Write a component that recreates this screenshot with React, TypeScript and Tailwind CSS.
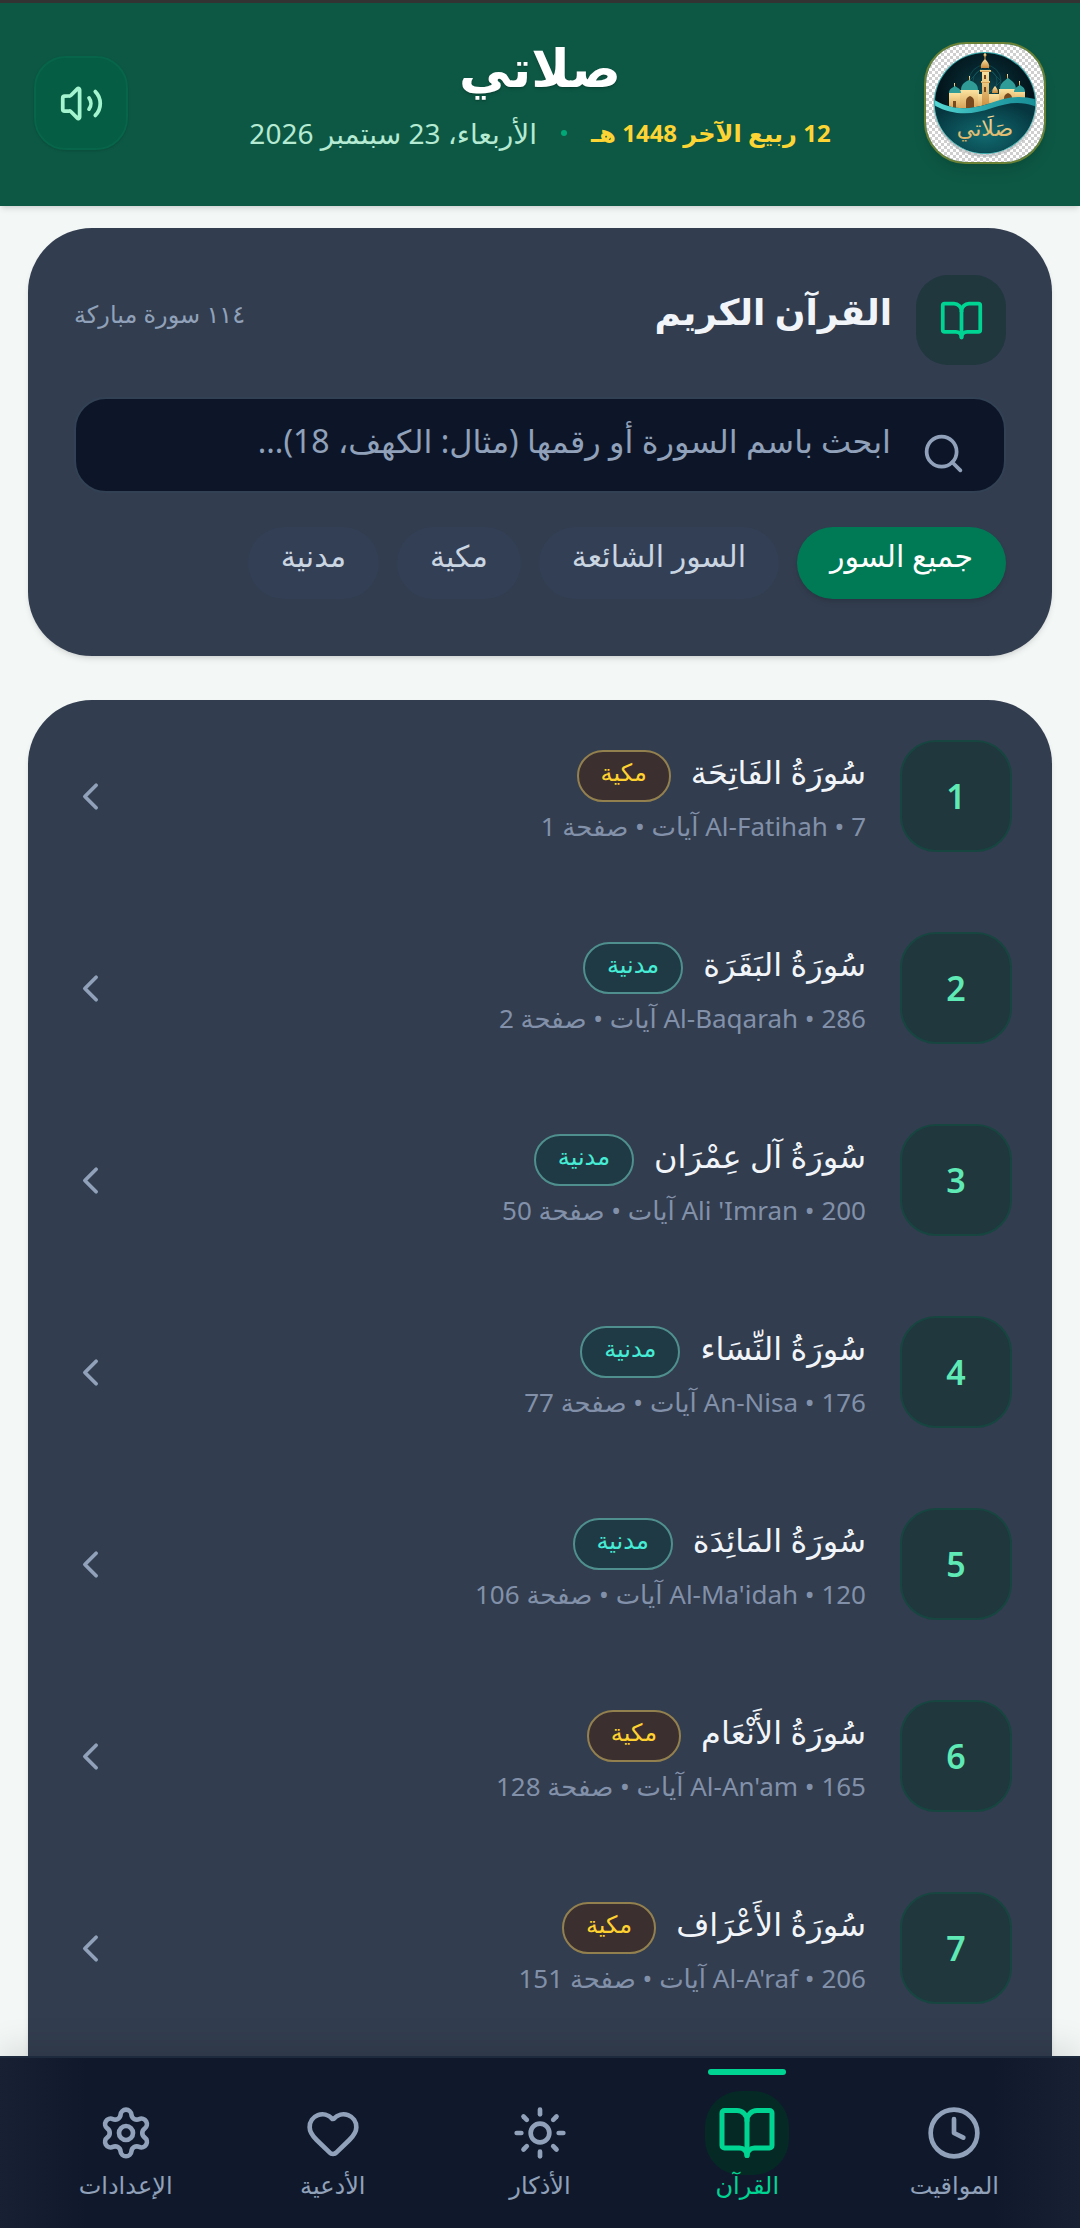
import { useState } from "react";
import { BookOpen, ChevronLeft, Clock, Heart, Search, Settings, Sun, Volume2 } from "lucide-react";
import clsx from "clsx";

type Surah = {
  id: number;
  name: string;
  latin: string;
  ayahs: number;
  page: number;
  place: "makki" | "madani";
};

const surahs: Surah[] = [
  { id: 1, name: "سُورَةُ الفَاتِحَة", latin: "Al-Fatihah", ayahs: 7, page: 1, place: "makki" },
  { id: 2, name: "سُورَةُ البَقَرَة", latin: "Al-Baqarah", ayahs: 286, page: 2, place: "madani" },
  { id: 3, name: "سُورَةُ آل عِمْرَان", latin: "Ali 'Imran", ayahs: 200, page: 50, place: "madani" },
  { id: 4, name: "سُورَةُ النِّسَاء", latin: "An-Nisa", ayahs: 176, page: 77, place: "madani" },
  { id: 5, name: "سُورَةُ المَائِدَة", latin: "Al-Ma'idah", ayahs: 120, page: 106, place: "madani" },
  { id: 6, name: "سُورَةُ الأَنْعَام", latin: "Al-An'am", ayahs: 165, page: 128, place: "makki" },
  { id: 7, name: "سُورَةُ الأَعْرَاف", latin: "Al-A'raf", ayahs: 206, page: 151, place: "makki" },
];

const filters = ["جميع السور", "السور الشائعة", "مكية", "مدنية"];

const tabs = [
  { label: "المواقيت", Icon: Clock },
  { label: "القرآن", Icon: BookOpen },
  { label: "الأذكار", Icon: Sun },
  { label: "الأدعية", Icon: Heart },
  { label: "الإعدادات", Icon: Settings },
];

function Logo() {
  return (
    <svg viewBox="0 0 118 118" className="size-full" role="img" aria-label="صلاتي">
      <defs>
        <pattern id="checks" width="6" height="6" patternUnits="userSpaceOnUse">
          <rect width="6" height="6" fill="#ffffff" />
          <rect width="3" height="3" fill="#cfcfcf" />
          <rect x="3" y="3" width="3" height="3" fill="#cfcfcf" />
        </pattern>
        <radialGradient id="night" cx="0.5" cy="0.4" r="0.45">
          <stop offset="0" stopColor="#0d4c55" />
          <stop offset="0.5" stopColor="#06242c" />
          <stop offset="1" stopColor="#020f16" />
        </radialGradient>
        <radialGradient id="sea" cx="0.5" cy="0.6" r="0.5">
          <stop offset="0" stopColor="#116a70" />
          <stop offset="1" stopColor="#06363f" />
        </radialGradient>
        <linearGradient id="gold" x1="0" y1="0" x2="0" y2="1">
          <stop offset="0" stopColor="#fbe3a0" />
          <stop offset="1" stopColor="#c98a3c" />
        </linearGradient>
        <linearGradient id="goldText" x1="0" y1="0" x2="0" y2="1">
          <stop offset="0" stopColor="#f3dc9c" />
          <stop offset="1" stopColor="#d9b061" />
        </linearGradient>
        <linearGradient id="wave" x1="0" y1="0" x2="1" y2="0">
          <stop offset="0" stopColor="#5fe0dc" />
          <stop offset="0.5" stopColor="#2aa7ac" />
          <stop offset="1" stopColor="#168a93" />
        </linearGradient>
        <clipPath id="disc">
          <circle cx="59" cy="59" r="50" />
        </clipPath>
      </defs>
      <rect width="118" height="118" fill="url(#checks)" />
      <circle cx="59" cy="61" r="52" fill="#9fa8a8" opacity="0.5" />
      <circle cx="59" cy="59" r="51" fill="#35a9ab" />
      <g clipPath="url(#disc)">
        <rect width="118" height="118" fill="url(#night)" />
        <g fill="none" stroke="#1f7d83" strokeWidth="0.6" opacity="0.6">
          <circle cx="59" cy="37" r="16" />
          <circle cx="59" cy="37" r="12" />
          <path d="M43 37 59 21 75 37 59 53Z" />
        </g>
        {/* mosque */}
        <g fill="url(#gold)">
          <rect x="23" y="49" width="12" height="22" />
          <rect x="34" y="46" width="19" height="25" />
          <rect x="52" y="50" width="32" height="21" />
          <rect x="73" y="45" width="18" height="20" />
          <rect x="89" y="47" width="10" height="15" />
          <path d="M56 27h7v38h-7z" />
          <rect x="54" y="26" width="11" height="2" />
          <rect x="55" y="37" width="9" height="2" />
          <path d="M55 24c-1-4 2-7 4-9 2 2 5 5 4 9z" />
          <circle cx="59" cy="11" r="1.5" />
          <rect x="58.5" y="7" width="1" height="9" />
          <path d="M66 49c0-4 2-6 3-7 1 1 3 3 3 7z" />
          <rect x="28" y="39" width="1" height="5" />
          <rect x="43" y="32" width="1" height="5" />
          <rect x="81" y="30" width="1" height="5" />
          <rect x="93" y="37" width="1" height="5" />
        </g>
        <g fill="#2f9c97">
          <path d="M23 49c0-4 3-5 6-7 3 2 6 3 6 7z" />
          <path d="M35 46c0-6 4-8 8-10 5 2 9 4 9 10z" />
          <path d="M74 45c0-6 4-8 8-11 4 3 8 5 8 11z" />
          <path d="M88 48c0-4 3-5 6-7 3 2 5 3 5 7z" />
        </g>
        <g fill="#7a4a1f">
          <path d="M40 67V57c0-3 2-4 4-5 2 1 4 2 4 5v10z" />
          <path d="M78 62v-8c0-3 2-4 4-5 2 1 4 2 4 5v8z" />
          <path d="M27 67V57h3v10zM58 31h2v4h-2zM58 43h2v5h-2z" />
        </g>
        <path d="M0 50C22 68 42 66 62 60 84 54 98 54 118 62V118H0Z" fill="url(#sea)" />
        <path d="M0 50C22 68 42 66 62 60 82 52 98 50 118 58V66C98 56 84 58 66 64 44 72 22 72 0 56Z" fill="url(#wave)" />
      </g>
      <text
        x="59"
        y="92"
        textAnchor="middle"
        fill="url(#goldText)"
        fontSize="22"
        className="font-['DejaVu_Sans',sans-serif]"
      >
        صَلَاتي
      </text>
    </svg>
  );
}

function SurahRow({ surah }: { surah: Surah }) {
  const makki = surah.place === "makki";
  return (
    <li>
      <button type="button" className="flex h-48 w-full items-center px-10 text-start">
        <span className="flex size-28 shrink-0 items-center justify-center rounded-[36px] border-2 border-[#174540] bg-[#1f373d] text-[34px] font-semibold text-[#5ee9b5]">
          {surah.id}
        </span>
        <span className="ms-[34px] flex min-w-0 flex-1 flex-col">
          <span className="flex items-center gap-5">
            <span className="pb-2 text-[32px] leading-[52px] text-[#f1f5f9]">{surah.name}</span>
            <span
              className={clsx(
                "rounded-full border-2 px-[22px] pt-1 pb-3 text-[24px] leading-8 font-medium",
                makki
                  ? "border-[#93804f] bg-[#3b2f2f] text-[#ffd230]"
                  : "border-[#4f8f8d] bg-[#1f3a44] text-[#46ecd5]"
              )}
            >
              {makki ? "مكية" : "مدنية"}
            </span>
          </span>
          <span className="text-[26px] leading-10 text-[#8291a9]">
            {surah.latin} • {surah.ayahs} آيات • صفحة {surah.page}
          </span>
        </span>
        <ChevronLeft size={45} className="shrink-0 text-[#90a1b9]" />
      </button>
    </li>
  );
}

export default function App() {
  const [query, setQuery] = useState("");
  const [filter, setFilter] = useState(filters[0]);
  const [tab, setTab] = useState("القرآن");

  return (
    <div
      dir="rtl"
      lang="ar"
      className="flex h-screen flex-col overflow-hidden bg-[#f3f7f6] font-['Noto_Sans','DejaVu_Sans',sans-serif]"
    >
      {/* Header */}
      <header className="z-10 grid h-[206px] shrink-0 grid-cols-[1fr_auto_1fr] items-center border-t-[3px] border-[#333333] bg-[#0d5844] px-[34px] pb-[3px] shadow-md">
        <div className="size-[122px] overflow-hidden rounded-[42px] border-2 border-[#6b8136] shadow-lg">
          <Logo />
        </div>
        <div className="flex flex-col items-center pb-2">
          <h1 className="mb-1 text-[52px] leading-[64px] font-bold text-white text-shadow-md">صلاتي</h1>
          <p className="flex items-center gap-6 text-[28px] leading-[60px]">
            <span className="text-[24px] font-bold text-[#fcd535]">12 ربيع الآخر 1448 هـ</span>
            <span className="size-[6px] rounded-full bg-[#00a878]" />
            <span className="text-[#b5ead3]">الأربعاء، 23 سبتمبر 2026</span>
          </p>
        </div>
        <button
          type="button"
          aria-label="الصوت"
          className="flex size-[94px] items-center justify-center justify-self-end rounded-[32px] border-2 border-[#076549] bg-[#055d43] text-[#a4f4cf] shadow-sm"
        >
          <Volume2 size={45} />
        </button>
      </header>

      <main className="flex min-h-0 flex-1 flex-col gap-11 px-7 pt-[22px]">
        {/* Search card */}
        <section className="shrink-0 rounded-[64px] bg-[#323d4f] px-[46px] pt-[47px] pb-[57px] shadow-md">
          <div className="flex items-center justify-between">
            <div className="flex items-center gap-6">
              <span className="flex size-[90px] items-center justify-center rounded-[32px] bg-[#1f373d] text-[#00d492]">
                <BookOpen size={45} />
              </span>
              <h2 className="pb-4 text-[36px] leading-[60px] font-bold text-[#f1f5f9]">القرآن الكريم</h2>
            </div>
            <span className="pb-3 text-[24px] text-[#90a1b9]">١١٤ سورة مباركة</span>
          </div>

          <label className="mt-8 flex h-24 items-center gap-[30px] rounded-[32px] border-2 border-[#334155] bg-[#0d1629] px-[38px]">
            <Search size={45} className="mt-4 shrink-0 text-[#90a1b9]" />
            <input
              type="text"
              value={query}
              onChange={(e) => setQuery(e.target.value)}
              aria-label="بحث"
              placeholder="ابحث باسم السورة أو رقمها (مثال: الكهف، 18)..."
              className="min-w-0 flex-1 bg-transparent pb-2 text-[32px] text-white outline-none placeholder:text-[#90a1b9]"
            />
          </label>

          <div className="mt-[34px] flex gap-[18px]">
            {filters.map((f) => (
              <button
                key={f}
                type="button"
                onClick={() => setFilter(f)}
                className={clsx(
                  "h-[72px] rounded-full px-[33px] pb-4 text-[30px] font-medium",
                  f === filter ? "bg-[#007a55] text-white shadow-md" : "bg-[#333f55] text-[#cad5e2]"
                )}
              >
                {f}
              </button>
            ))}
          </div>
        </section>

        {/* Surah list */}
        <ul className="min-h-0 flex-1 rounded-t-[64px] bg-[#323d4f] shadow-md">
          {surahs.map((s) => (
            <SurahRow key={s.id} surah={s} />
          ))}
        </ul>
      </main>

      {/* Bottom tabs */}
      <nav className="z-10 grid h-[172px] shrink-0 grid-cols-5 border-t-2 border-[#1d293d] bg-[linear-gradient(to_right,#182034,#10192c_8%,#10192c_92%,#182034)] px-[22px] shadow-[0_-10px_30px_rgba(0,0,0,0.1)]">
        {tabs.map(({ label, Icon }) => {
          const active = label === tab;
          return (
            <button
              key={label}
              type="button"
              onClick={() => setTab(label)}
              className={clsx(
                "flex flex-col items-center pt-[11px]",
                active ? "text-[#00d492]" : "text-[#90a1b9]"
              )}
            >
              <span className={clsx("h-[6px] w-[78px] rounded-full", active && "bg-[#00d492]")} />
              <span
                className={clsx(
                  "mt-4 flex size-[84px] items-center justify-center rounded-[36px]",
                  active && "bg-[#052a26]"
                )}
              >
                <Icon size={active ? 60 : 56} />
              </span>
              <span className="text-[24px] leading-5 font-medium">{label}</span>
            </button>
          );
        })}
      </nav>
    </div>
  );
}
